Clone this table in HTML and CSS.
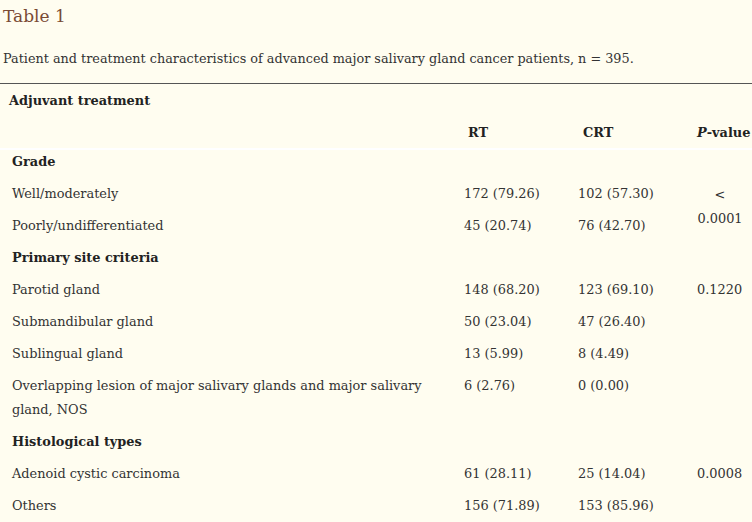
FILE: index.html
```html
<!DOCTYPE html>
<html>
<head>
<meta charset="utf-8">
<link rel="stylesheet" href="styles.css">
</head>
<body>
<div class="page">
  <h2 class="title">Table 1</h2>
  <p class="caption">Patient and treatment characteristics of advanced major salivary gland cancer patients, n = 395.</p>
  <table class="tbl">
    <colgroup>
      <col class="c-label"><col class="c-rt"><col class="c-crt"><col class="c-p">
    </colgroup>
    <thead>
      <tr class="h1"><th class="lbl" colspan="4">Adjuvant treatment</th></tr>
      <tr class="h2"><th></th><th>RT</th><th class="crt">CRT</th><th class="pv"><i>P</i>-value</th></tr>
    </thead>
    <tbody>
      <tr><td class="grp">Grade</td><td></td><td></td><td></td></tr>
      <tr><td>Well/moderately</td><td>172 (79.26)</td><td>102 (57.30)</td><td class="pc" rowspan="2"><div class="pbox">&lt; 0.0001</div></td></tr>
      <tr><td>Poorly/undifferentiated</td><td>45 (20.74)</td><td>76 (42.70)</td></tr>
      <tr><td class="grp">Primary site criteria</td><td></td><td></td><td></td></tr>
      <tr><td>Parotid gland</td><td>148 (68.20)</td><td>123 (69.10)</td><td>0.1220</td></tr>
      <tr><td>Submandibular gland</td><td>50 (23.04)</td><td>47 (26.40)</td><td></td></tr>
      <tr><td>Sublingual gland</td><td>13 (5.99)</td><td>8 (4.49)</td><td></td></tr>
      <tr><td>Overlapping lesion of major salivary glands and major salivary gland, NOS</td><td>6 (2.76)</td><td>0 (0.00)</td><td></td></tr>
      <tr><td class="grp">Histological types</td><td></td><td></td><td></td></tr>
      <tr><td>Adenoid cystic carcinoma</td><td>61 (28.11)</td><td>25 (14.04)</td><td>0.0008</td></tr>
      <tr><td>Others</td><td>156 (71.89)</td><td>153 (85.96)</td><td></td></tr>
    </tbody>
  </table>
</div>
</body>
</html>
```
FILE: styles.css
```css
html, body {
  margin: 0;
  padding: 0;
  background: #fffdf0;
  overflow: hidden;
}
.page {
  font-family: "DejaVu Serif", "Liberation Serif", serif;
  color: #333;
  font-size: 12.9px;
  line-height: 24px;
}
.title {
  margin: 0;
  padding: 3px 0 0 3px;
  font-size: 17px;
  font-weight: normal;
  line-height: 26px;
  color: #7a4a35;
}
.caption {
  margin: 18px 0 0 3px;
  line-height: 24px;
  font-size: 12.8px;
}
.tbl {
  margin-top: 12px;
  border-collapse: collapse;
  table-layout: fixed;
  width: 820px;
  border-top: 1px solid #555;
}
.c-label { width: 456px; }
.c-rt { width: 114px; }
.c-crt { width: 119px; }
.c-p { width: 131px; }
th {
  text-align: left;
  font-weight: bold;
  color: #222;
  padding: 5px 0 3px 8px;
  vertical-align: top;
}
th.lbl { padding-left: 9px; }
.h2 th { padding-left: 12px; }
.h2 th.crt { padding-left: 13px; }
.h2 th.pv { padding-left: 8px; }
thead {
  border-bottom: 2px solid #fff;
}
td {
  padding: 0 8px 8px 8px;
  vertical-align: top;
}
td:first-child { padding-left: 12px; }
td.grp { font-weight: bold; color: #222; }
.pbox {
  width: 46px;
  padding-top: 1px;
  text-align: center;
}
```
